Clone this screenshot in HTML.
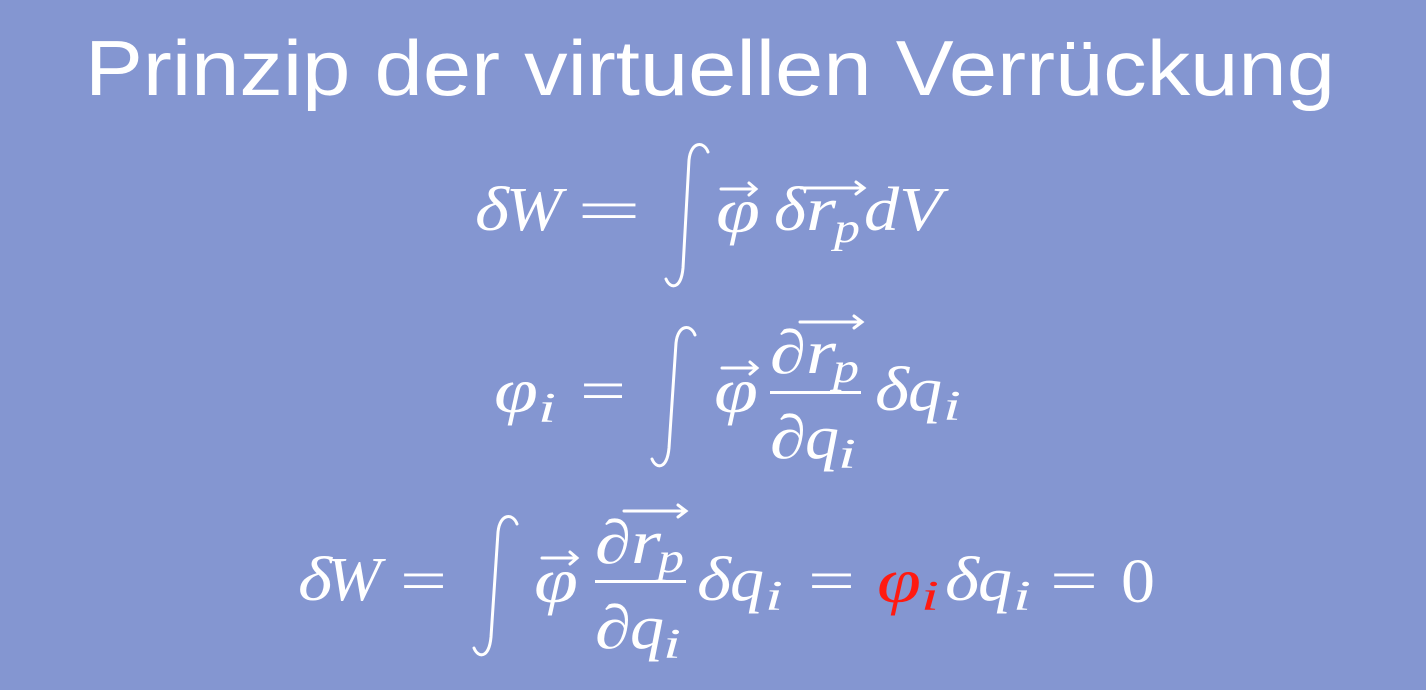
<!DOCTYPE html>
<html><head><meta charset="utf-8"><style>
html,body{margin:0;padding:0;background:#8496D1;}
svg{display:block}
.t{font-family:"Liberation Sans",sans-serif;fill:#fff}
.m{font-family:"Liberation Serif",serif;font-style:italic;fill:#fff}
.n{font-family:"Liberation Serif",serif;fill:#fff}
.s{stroke:#fff;fill:none;stroke-width:3;stroke-linecap:round}
</style></head><body>
<svg width="1426" height="690" viewBox="0 0 1426 690" xmlns="http://www.w3.org/2000/svg">
<rect width="1426" height="690" fill="#8496D1"/>
<text class="t" x="85" y="95" font-size="78" textLength="1250" lengthAdjust="spacingAndGlyphs">Prinzip der virtuellen Verrückung</text>

<!-- Eq1 -->
<text class="m" x="475" y="230" font-size="62" textLength="34" lengthAdjust="spacingAndGlyphs">δ</text>
<text class="m" x="506" y="230" font-size="62" textLength="56" lengthAdjust="spacingAndGlyphs">W</text>
<text class="n" x="577" y="230" font-size="58" textLength="64" lengthAdjust="spacingAndGlyphs">=</text>
<path class="s" d="M708,152 C704,141 691,141 689,160 L683,268 C681,290 670,289 666,279"/>
<text class="m" x="716" y="232" font-size="64" textLength="44" lengthAdjust="spacingAndGlyphs">φ</text>
<path class="s" d="M721,189 L756,189 M749,183 L756,189 L749,195"/>
<text class="m" x="774" y="230" font-size="62" textLength="32" lengthAdjust="spacingAndGlyphs">δ</text>
<text class="m" x="806" y="230" font-size="62" textLength="30" lengthAdjust="spacingAndGlyphs">r</text>
<text class="m" x="834" y="242" font-size="42" textLength="26" lengthAdjust="spacingAndGlyphs">p</text>
<path class="s" d="M801,188 L864,188 M856,182 L864,188 L856,194"/>
<text class="m" x="864" y="230" font-size="62" textLength="78" lengthAdjust="spacingAndGlyphs">dV</text>

<!-- Eq2 -->
<text class="m" x="494" y="412" font-size="64" textLength="44" lengthAdjust="spacingAndGlyphs">φ</text>
<text class="m" x="538" y="422" font-size="42" textLength="18" lengthAdjust="spacingAndGlyphs">i</text>
<text class="n" x="580" y="410" font-size="58" textLength="46" lengthAdjust="spacingAndGlyphs">=</text>
<path class="s" d="M695,335 C691,324 678,324 676,343 L669,448 C667,470 656,469 652,459"/>
<text class="m" x="714" y="412" font-size="64" textLength="44" lengthAdjust="spacingAndGlyphs">φ</text>
<path class="s" d="M722,368 L757,368 M750,362 L757,368 L750,374"/>
<text class="n" x="770" y="373" font-size="62" textLength="36" lengthAdjust="spacingAndGlyphs">∂</text>
<text class="m" x="806" y="373" font-size="62" textLength="30" lengthAdjust="spacingAndGlyphs">r</text>
<text class="m" x="833" y="382" font-size="42" textLength="26" lengthAdjust="spacingAndGlyphs">p</text>
<path class="s" d="M800,322 L862,322 M854,316 L862,322 L854,328"/>
<rect x="770" y="391" width="91" height="3" fill="#fff"/>
<text class="n" x="770" y="458" font-size="62" textLength="36" lengthAdjust="spacingAndGlyphs">∂</text>
<text class="m" x="805" y="458" font-size="62" textLength="34" lengthAdjust="spacingAndGlyphs">q</text>
<text class="m" x="838" y="468" font-size="42" textLength="18" lengthAdjust="spacingAndGlyphs">i</text>
<text class="m" x="875" y="410" font-size="62" textLength="34" lengthAdjust="spacingAndGlyphs">δ</text>
<text class="m" x="908" y="410" font-size="62" textLength="34" lengthAdjust="spacingAndGlyphs">q</text>
<text class="m" x="943" y="420" font-size="42" textLength="18" lengthAdjust="spacingAndGlyphs">i</text>

<!-- Eq3 -->
<text class="m" x="298" y="600" font-size="62" textLength="34" lengthAdjust="spacingAndGlyphs">δ</text>
<text class="m" x="327" y="600" font-size="62" textLength="54" lengthAdjust="spacingAndGlyphs">W</text>
<text class="n" x="400" y="600" font-size="58" textLength="47" lengthAdjust="spacingAndGlyphs">=</text>
<path class="s" d="M517,524 C513,513 500,513 498,532 L491,637 C489,659 478,658 474,648"/>
<text class="m" x="534" y="602" font-size="64" textLength="44" lengthAdjust="spacingAndGlyphs">φ</text>
<path class="s" d="M542,558 L577,558 M570,552 L577,558 L570,564"/>
<text class="n" x="595" y="563" font-size="62" textLength="36" lengthAdjust="spacingAndGlyphs">∂</text>
<text class="m" x="631" y="563" font-size="62" textLength="30" lengthAdjust="spacingAndGlyphs">r</text>
<text class="m" x="658" y="572" font-size="42" textLength="26" lengthAdjust="spacingAndGlyphs">p</text>
<path class="s" d="M624,511 L686,511 M678,505 L686,511 L678,517"/>
<rect x="595" y="580" width="91" height="3" fill="#fff"/>
<text class="n" x="595" y="648" font-size="62" textLength="36" lengthAdjust="spacingAndGlyphs">∂</text>
<text class="m" x="630" y="648" font-size="62" textLength="34" lengthAdjust="spacingAndGlyphs">q</text>
<text class="m" x="663" y="658" font-size="42" textLength="18" lengthAdjust="spacingAndGlyphs">i</text>
<text class="m" x="697" y="600" font-size="62" textLength="34" lengthAdjust="spacingAndGlyphs">δ</text>
<text class="m" x="730" y="600" font-size="62" textLength="34" lengthAdjust="spacingAndGlyphs">q</text>
<text class="m" x="765" y="610" font-size="42" textLength="18" lengthAdjust="spacingAndGlyphs">i</text>
<text class="n" x="808" y="600" font-size="58" textLength="47" lengthAdjust="spacingAndGlyphs">=</text>
<text class="m" x="877" y="602" font-size="64" textLength="44" lengthAdjust="spacingAndGlyphs" style="fill:#ff1a10">φ</text>
<text class="m" x="921" y="610" font-size="42" textLength="18" lengthAdjust="spacingAndGlyphs" style="fill:#ff1a10">i</text>
<text class="m" x="945" y="600" font-size="62" textLength="34" lengthAdjust="spacingAndGlyphs">δ</text>
<text class="m" x="978" y="600" font-size="62" textLength="34" lengthAdjust="spacingAndGlyphs">q</text>
<text class="m" x="1013" y="610" font-size="42" textLength="18" lengthAdjust="spacingAndGlyphs">i</text>
<text class="n" x="1050" y="600" font-size="58" textLength="48" lengthAdjust="spacingAndGlyphs">=</text>
<text class="n" x="1121" y="602" font-size="62" textLength="34" lengthAdjust="spacingAndGlyphs">0</text>
</svg>
</body></html>
